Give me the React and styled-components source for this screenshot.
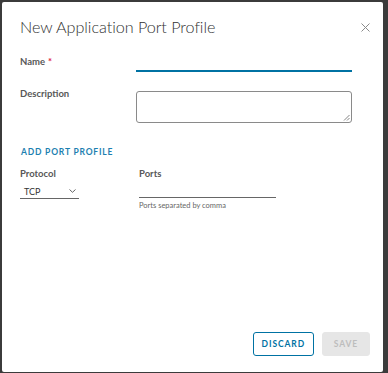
import React from 'react';
import styled, { createGlobalStyle } from 'styled-components';

const GlobalStyle = createGlobalStyle`
  html, body {
    margin: 0;
    padding: 0;
    background: #3b3b3b;
    font-family: Lato, "Open Sans", sans-serif;
  }
`;

const Backdrop = styled.div`
  width: 388px;
  height: 373px;
  box-sizing: border-box;
  padding: 2px 5px 1px 2px;
  display: flex;
`;

const Dialog = styled.div`
  flex: 1;
  background: #ffffff;
  border-radius: 2px;
  display: flex;
  flex-direction: column;
  padding: 12px 12px 16px 18px;
  box-sizing: border-box;
`;

const Header = styled.div`
  display: flex;
  align-items: center;
  justify-content: space-between;
  height: 24px;
`;

const Title = styled.h3`
  margin: 0;
  font-size: 16.2px;
  font-weight: 300;
  color: #313131;
  letter-spacing: -0.05px;
`;

const Close = styled.button`
  border: none;
  background: none;
  padding: 0;
  width: 12px;
  height: 12px;
  display: flex;
  align-items: center;
  justify-content: center;
  cursor: pointer;
  margin-top: 2px;
`;

const Body = styled.div`
  flex: 1;
  display: flex;
  flex-direction: column;
  padding-top: 14px;
`;

const Row = styled.div`
  display: grid;
  grid-template-columns: 116px 216px;
  align-items: start;
  margin-bottom: ${p => p.gap || 0}px;
`;

const Label = styled.label`
  font-size: 9.5px;
  font-weight: 700;
  color: #585858;
  margin-top: ${p => p.mt || 0}px;
`;

const Required = styled.span`
  color: #e02040;
  margin-left: 3px;
`;

const LineInput = styled.div`
  height: 18px;
  border-bottom: 2px solid #0072a3;
`;

const TextArea = styled.div`
  height: 30px;
  border: 1px solid #8a8a8a;
  border-radius: 3px;
  position: relative;
`;

const Grip = styled.svg`
  position: absolute;
  right: 1px;
  bottom: 1px;
`;

const LinkButton = styled.div`
  margin-top: 24px;
  font-size: 8.5px;
  font-weight: 700;
  letter-spacing: 0.8px;
  color: #1c7fb0;
  padding-left: 1px;
`;

const PortRow = styled.div`
  display: flex;
  gap: 60px;
  margin-top: 11px;
`;

const Field = styled.div`
  display: flex;
  flex-direction: column;
`;

const SmallLabel = styled.div`
  font-size: 9.5px;
  font-weight: 700;
  color: #585858;
  height: 12px;
`;

const Select = styled.div`
  width: 59px;
  height: 18px;
  margin-top: 1px;
  box-sizing: border-box;
  border-bottom: 1px solid #666;
  display: flex;
  align-items: center;
  justify-content: space-between;
  padding: 3px 3px 0 4px;
  font-size: 9px;
  color: #333;
`;

const PortsInput = styled.div`
  width: 137px;
  height: 17px;
  border-bottom: 1px solid #666;
`;

const Help = styled.div`
  font-size: 7.5px;
  color: #666;
  margin-top: 3px;
`;

const Footer = styled.div`
  display: flex;
  justify-content: flex-end;
  gap: 8px;
  padding-right: 1px;
`;

const Button = styled.button`
  height: 24px;
  min-width: ${p => p.w}px;
  box-sizing: border-box;
  border-radius: 3px;
  font-family: Lato, "Open Sans", sans-serif;
  font-size: 8.5px;
  font-weight: 700;
  letter-spacing: 0.9px;
  border: 1px solid ${p => (p.disabled ? '#e6e6e6' : '#0072a3')};
  background: ${p => (p.disabled ? '#e6e6e6' : '#fff')};
  color: ${p => (p.disabled ? '#bdbdbd' : '#0072a3')};
  padding: 0 8px;
`;

export default function App() {
  return (
    <>
      <GlobalStyle />
      <Backdrop>
        <Dialog>
          <Header>
            <Title>New Application Port Profile</Title>
            <Close aria-label="Close">
              <svg width="9" height="9" viewBox="0 0 9 9">
                <path d="M0.5 0.5 L8.5 8.5 M8.5 0.5 L0.5 8.5" stroke="#8a8a8a" strokeWidth="1" />
              </svg>
            </Close>
          </Header>
          <Body>
            <Row gap={19}>
              <Label mt={4}>
                Name<Required>*</Required>
              </Label>
              <LineInput />
            </Row>
            <Row>
              <Label mt={-3}>Description</Label>
              <TextArea>
                <Grip width="7" height="7" viewBox="0 0 7 7">
                  <path d="M1 6.5 L6.5 1 M4 6.5 L6.5 4" stroke="#666" strokeWidth="0.8" />
                </Grip>
              </TextArea>
            </Row>
            <LinkButton>ADD PORT PROFILE</LinkButton>
            <PortRow>
              <Field>
                <SmallLabel>Protocol</SmallLabel>
                <Select>
                  <span>TCP</span>
                  <svg width="7" height="4" viewBox="0 0 7 4">
                    <path d="M0.5 0.5 L3.5 3.3 L6.5 0.5" stroke="#555" strokeWidth="0.9" fill="none" />
                  </svg>
                </Select>
              </Field>
              <Field>
                <SmallLabel>Ports</SmallLabel>
                <PortsInput />
                <Help>Ports separated by comma</Help>
              </Field>
            </PortRow>
          </Body>
          <Footer>
            <Button w={61}>DISCARD</Button>
            <Button w={48} disabled>SAVE</Button>
          </Footer>
        </Dialog>
      </Backdrop>
    </>
  );
}
